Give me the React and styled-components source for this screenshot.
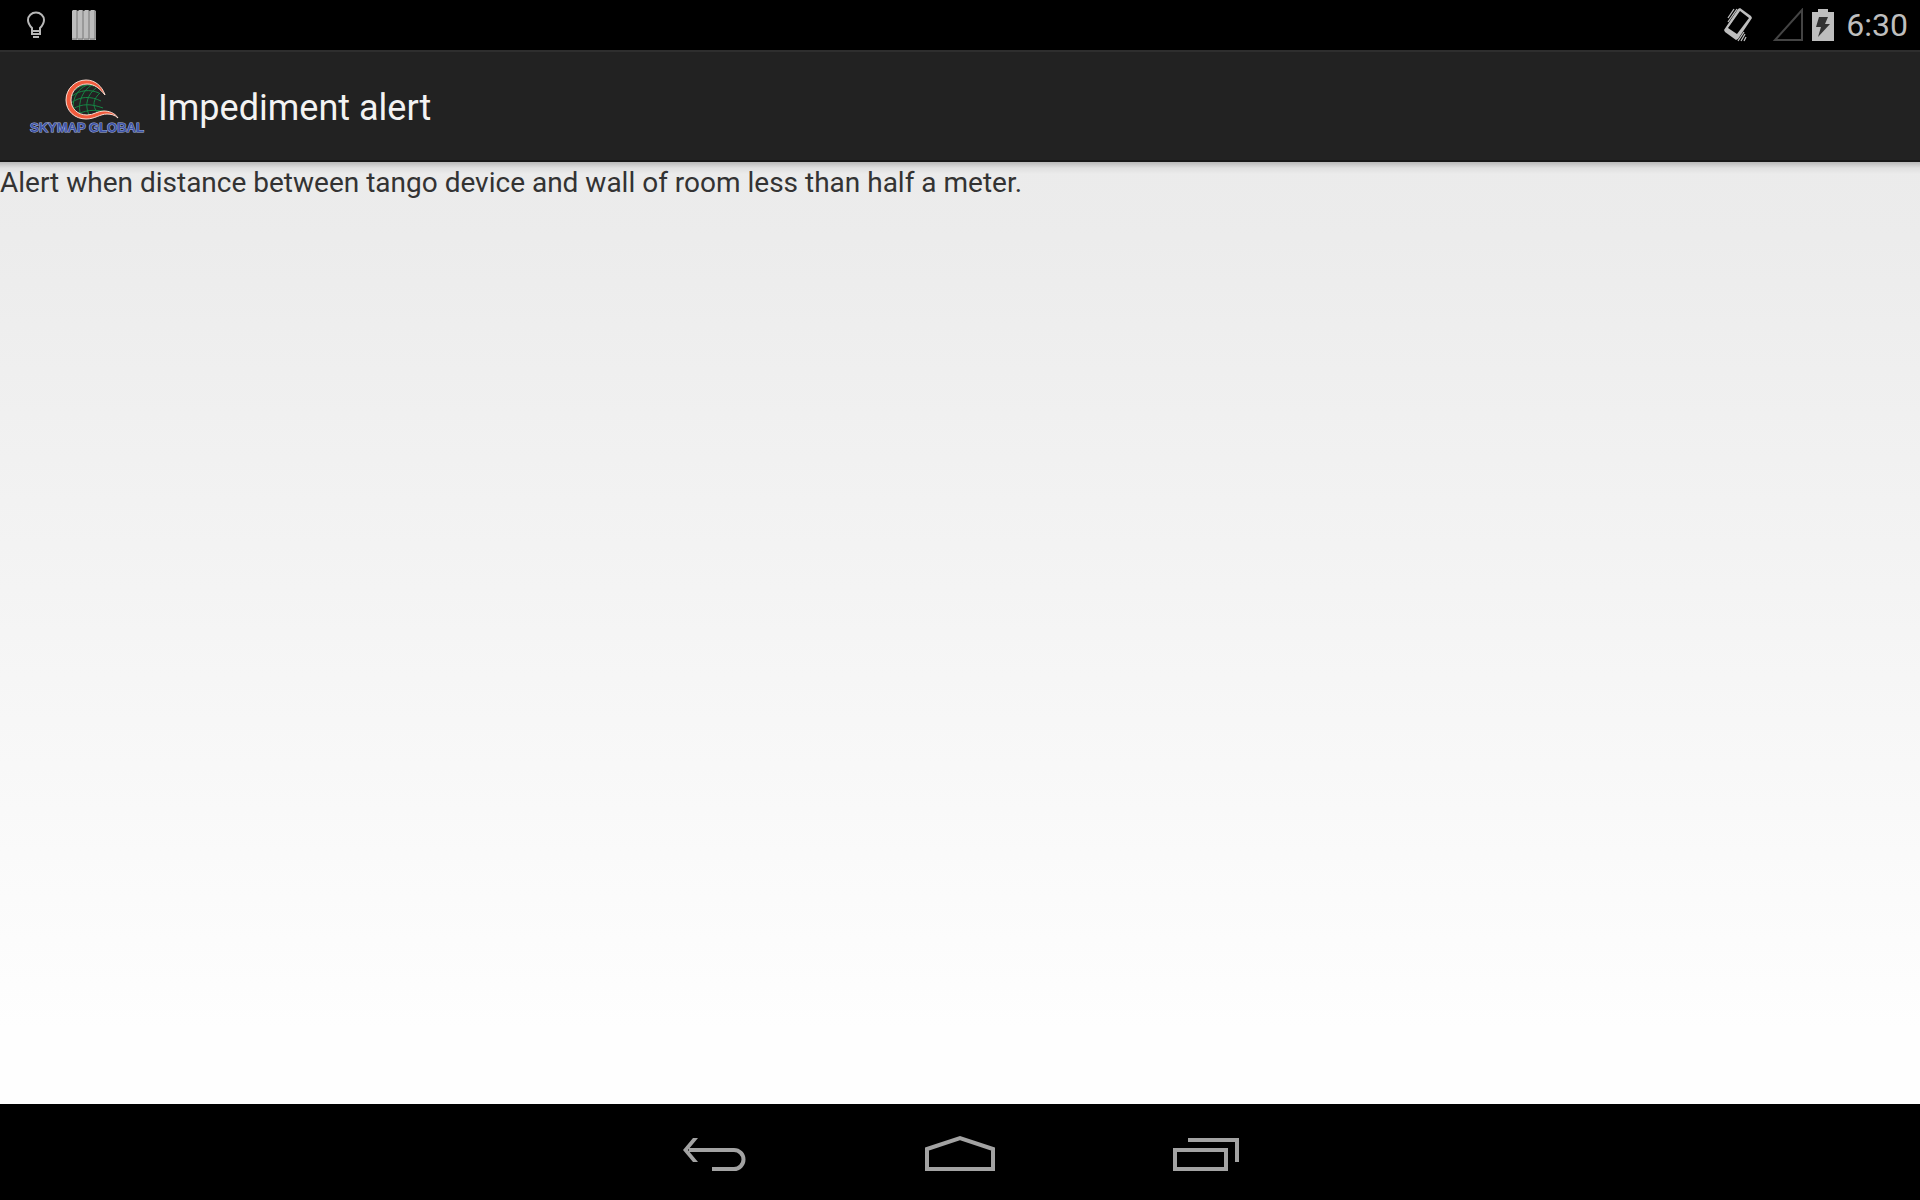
import React from "react";
import styled, { createGlobalStyle } from "styled-components";

const GlobalStyle = createGlobalStyle`
  body {
    margin: 0;
    font-family: Roboto, "Noto Sans", sans-serif;
  }
`;
const Screen = styled.div`
  min-height: 100vh;
  display: flex;
  flex-direction: column;
`;
const StatusBar = styled.div`
  box-sizing: border-box;
  height: 50px;
  padding: 0 12px 0 24px;
  display: flex;
  align-items: center;
  justify-content: space-between;
  background: #000;
  color: #bebebe;
`;
const StatusGroup = styled.div`
  display: flex;
  align-items: center;
  gap: ${(props) => props.$gap};
`;
const Icon = styled.svg`
  display: block;
  flex: none;
`;
const VibrateIcon = styled(Icon)`
  margin-right: 12px;
`;
const Clock = styled.time`
  margin-left: 4px;
  font-size: 32px;
  line-height: 48px;
`;
const ActionBar = styled.header`
  box-sizing: border-box;
  height: 112px;
  padding: 4px 28px 0;
  display: flex;
  align-items: center;
  gap: 12px;
  background: #222;
  border-top: 2px solid #2e2e2e;
  border-bottom: 2px solid #171717;
`;
const Title = styled.h1`
  margin: 0;
  color: #f3f3f3;
  font-size: 36px;
  font-weight: 400;
  line-height: 48px;
`;
const Content = styled.main`
  flex: 1;
  background:
    linear-gradient(rgba(0, 0, 0, 0.22), rgba(0, 0, 0, 0.05) 50%, transparent) 0 0 / 100% 12px no-repeat,
    linear-gradient(#ebebeb, #ececec 8%, #fefefe 92%);
`;
const Message = styled.p`
  margin: 0;
  padding-top: 4px;
  color: #333;
  font-size: 28px;
  line-height: 34px;
`;
const NavBar = styled.nav`
  box-sizing: border-box;
  height: 96px;
  padding-top: 6px;
  display: flex;
  justify-content: center;
  background: #000;
`;
const NavButton = styled.button`
  width: 246px;
  padding: 0;
  display: flex;
  align-items: center;
  justify-content: center;
  border: 0;
  background: none;
  color: #a3a3a3;
  cursor: pointer;
`;

function Logo() {
  return (
    <Icon width="118" height="58" viewBox="0 0 118 58" role="img" aria-label="Skymap Global">
      <g fill="none" stroke="#158544" strokeWidth="1">
        <path d="M47 11C53 6 59 5 66 7M44 17C52 11 62 10 71 14M43 24C52 17 63 17 73 22M45 30C54 24 64 25 75 29M50 35C60 30 70 31 80 33" />
        <path d="M59 6C50 10 45 18 45 29M64 6C55 11 50 22 52 34M68 9C60 15 56 25 61 36M72 14C66 19 63 27 70 34" />
      </g>
      <path
        d="M77 16C74 7 67 1 58 1C47 1 38 10 38 21C38 32 47 40 58 40C67 40 72 35 79 35C83 35 87 36 90 39C87 34 81 32 76 32C69 32 66 36 59 36C50 36 43 30 43 21C43 12 50 5 59 5C67 5 72 10 77 16Z"
        fill="#f05a3c"
        stroke="#f8dcd2"
        strokeWidth="1"
      />
      <text
        x="2"
        y="53"
        fill="#3f55a8"
        stroke="#a9b6de"
        strokeWidth="1"
        paintOrder="stroke"
        fontFamily="Liberation Sans, sans-serif"
        fontSize="13"
        fontWeight="700"
      >
        SKYMAP GLOBAL
      </text>
    </Icon>
  );
}

function App() {
  return (
    <Screen>
      <GlobalStyle />
      <StatusBar>
        <StatusGroup $gap="24px">
          <Icon width="24" height="30" viewBox="0 0 24 30" fill="none" stroke="#b8b8b8" strokeWidth="2">
            <path d="M8 21V18C6 16 4 14 4 10A8 7.5 0 0 1 20 10C20 14 18 16 16 18V21ZM8 21V24H16V21" />
            <path d="M9 27H15" />
          </Icon>
          <Icon width="24" height="30" viewBox="0 0 24 30">
            {[0, 6, 12, 18].map((x) => (
              <g key={x}>
                <path d={`M${x} 1L${x + 1} 0H${x + 4}L${x + 6} 1V30H${x}Z`} fill="#bdbdbd" />
                <path d={`M${x + 5} 1V29H${x}`} fill="none" stroke="#777" />
              </g>
            ))}
          </Icon>
        </StatusGroup>
        <StatusGroup $gap="8px">
          <VibrateIcon width="28" height="34" viewBox="0 0 28 34" fill="none" stroke="#bebebe">
            <path
              fillRule="evenodd"
              d="M14 1L16 0L27 8L28 10L14 31L12 32L1 24L0 22ZM16 3L4 20L13 26L25 10Z"
              fill="#bebebe"
              stroke="none"
            />
            <path d="M4 10L10 1M4 14L13 1M5 17L15 2M14 33L20 24M17 33L21 26M20 33L22 29" strokeWidth="1.3" />
          </VibrateIcon>
          <Icon width="32" height="34" viewBox="0 0 32 34" fill="none" stroke="#444" strokeWidth="2">
            <path d="M30 2V32H3Z" />
          </Icon>
          <Icon width="22" height="32" viewBox="0 0 22 32">
            <path d="M6 0H16V3H22V32H0V3H6Z" fill="#bebebe" />
            <path d="M7 8H16L13 15H18L6 28L9 18H4Z" fill="#333" />
          </Icon>
          <Clock>6:30</Clock>
        </StatusGroup>
      </StatusBar>
      <ActionBar>
        <Logo />
        <Title>Impediment alert</Title>
      </ActionBar>
      <Content>
        <Message>Alert when distance between tango device and wall of room less than half a meter.</Message>
      </Content>
      <NavBar>
        <NavButton type="button" aria-label="Back">
          <Icon width="66" height="40" viewBox="-2 0 66 40" fill="none" stroke="currentColor" strokeWidth="4">
            <path d="M6 15H51A9.5 9.5 0 0 1 51 34H29" />
            <path d="M0 15L10 3H15L5 15L15 27H10Z" fill="currentColor" stroke="none" />
          </Icon>
        </NavButton>
        <NavButton type="button" aria-label="Home">
          <Icon width="70" height="40" viewBox="0 0 70 40" fill="none" stroke="currentColor" strokeWidth="4">
            <path d="M2 34V14L35 3L68 14V34Z" />
          </Icon>
        </NavButton>
        <NavButton type="button" aria-label="Recent apps">
          <Icon width="66" height="40" viewBox="0 0 66 40" fill="none" stroke="currentColor" strokeWidth="4">
            <path d="M2 15H53V34H2Z" />
            <path d="M15 5H64V27" />
          </Icon>
        </NavButton>
      </NavBar>
    </Screen>
  );
}

export default App;
